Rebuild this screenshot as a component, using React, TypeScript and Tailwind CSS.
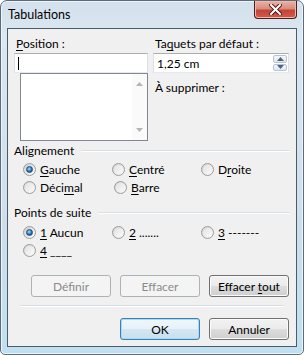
import { ReactNode } from "react";

const Key = ({ children }: { children: ReactNode }) => (
  <span className="underline underline-offset-[2px] decoration-[1px]">{children}</span>
);

const Radio = ({ checked }: { checked?: boolean }) => {
  return (
    <span className="flex h-[13px] w-[13px] shrink-0 items-center justify-center rounded-full border border-[#9c9c9c] bg-linear-to-br from-[#cfcfcf] to-[#ffffff]">
      {checked ? (
        <span className="h-[7px] w-[7px] rounded-full border border-[#1a4a7a] bg-[radial-gradient(circle_at_40%_35%,#a8dcff_0%,#2b78b8_55%,#0f3f70_100%)]" />
      ) : (
        <span className="h-[9px] w-[9px] rounded-full bg-linear-to-br from-[#e2e2e2] to-[#fafafa]" />
      )}
    </span>
  );
};

type OptionProps = {
  checked?: boolean;
  children: ReactNode;
};

const Option = ({ checked, children }: OptionProps) => {
  return (
    <div className="flex h-[18px] w-[91px] items-center gap-[4px]">
      <Radio checked={checked} />
      <span className="whitespace-pre">{children}</span>
    </div>
  );
};

const GroupTitle = ({ children }: { children: ReactNode }) => {
  return (
    <div className="flex h-[15px] items-center gap-[7px]">
      <span>{children}</span>
      <div className="flex-1 border-t border-[#d5dfe5] border-b border-b-white" />
    </div>
  );
};

type ButtonProps = {
  children: ReactNode;
  disabled?: boolean;
  primary?: boolean;
};

const Button = ({ children, disabled, primary }: ButtonProps) => {
  const style = disabled
    ? "border-[#adb2b5] bg-[#f4f4f4] text-[#8b8b8b]"
    : primary
      ? "border-[#3c7fb1] bg-[linear-gradient(#f0f7fc_0%,#e6f1f8_50%,#d5e7f3_50%,#c8dff0_100%)] shadow-[inset_0_0_0_1px_#a5dcf7] text-black"
      : "border-[#707070] bg-[linear-gradient(#f2f2f2_0%,#ebebeb_50%,#dddddd_50%,#cfcfcf_100%)] shadow-[inset_0_0_0_1px_#fbfbfb] text-black";

  return (
    <button
      className={`flex h-[22px] w-[80px] items-center justify-center rounded-[3px] border ${style}`}
    >
      <span className="whitespace-pre">{children}</span>
    </button>
  );
};

const CloseButton = () => {
  return (
    <div className="flex h-[18px] w-[43px] items-center justify-center rounded-b-[4px] border border-t-0 border-[#4d1d1a] bg-[linear-gradient(#eab2a4_0%,#d88c7c_45%,#c2453a_55%,#d5584a_100%)] shadow-[inset_0_0_0_1px_#f0b9ad]">
      <svg width="13" height="11" viewBox="0 0 13 11">
        <path
          d="M2 1 L11 10 M11 1 L2 10"
          stroke="#4a1a16"
          strokeWidth="4"
          strokeLinecap="square"
        />
        <path
          d="M2 1 L11 10 M11 1 L2 10"
          stroke="#ffffff"
          strokeWidth="2"
          strokeLinecap="square"
        />
      </svg>
    </div>
  );
};

export default function App() {
  return (
    <div className="h-[355px] w-[304px] bg-white font-['Lato',sans-serif] text-[12px] leading-[15px] text-black">
      <div className="flex h-full w-full flex-col rounded-t-[7px] rounded-b-[5px] border border-[#5c6b79] bg-[linear-gradient(#d3e1ec_0%,#dbe7f1_10%,#cfdfeb_60%,#bfe0f0_100%)] px-[6px] pb-[7px] shadow-[inset_0_0_0_1px_#eef5fa]">
        <div className="flex h-[27px] items-start justify-between">
          <span className="mt-[6px] pl-[1px] text-[12.5px] text-black">Tabulations</span>
          <CloseButton />
        </div>

        <div className="flex flex-1 flex-col border border-[#4c5b69] bg-[#f0f0f0] px-[6px]">
          <div className="flex pt-[7px]">
            <div className="flex w-[134px] flex-col">
              <span className="mb-[2px] pl-[2px]">
                <Key>P</Key>osition :
              </span>
              <div className="flex h-[20px] items-center border border-[#abadb3] border-b-[#e3e9ef] border-x-[#dbdfe6] bg-white pl-[3px]">
                <span className="h-[13px] w-px bg-black" />
              </div>
              <div className="ml-[6px] flex h-[68px] border border-[#828790] bg-white">
                <div className="flex-1" />
                <div className="flex w-[15px] flex-col items-center justify-between bg-[#fafafa] py-[8px]">
                  <svg width="7" height="4" viewBox="0 0 7 4">
                    <path d="M0 4 L3.5 0 L7 4 Z" fill="#b5b5b5" />
                  </svg>
                  <svg width="7" height="4" viewBox="0 0 7 4">
                    <path d="M0 0 L3.5 4 L7 0 Z" fill="#b5b5b5" />
                  </svg>
                </div>
              </div>
            </div>

            <div className="ml-[5px] flex w-[136px] flex-col">
              <span className="mb-[2px] pl-[2px]">
                Ta<Key>q</Key>uets par défaut :
              </span>
              <div className="flex h-[20px] items-center border border-[#abadb3] border-b-[#e3e9ef] border-x-[#dbdfe6] bg-white pl-[3px]">
                <span className="flex-1">1,25 cm</span>
                <div className="mr-px flex h-[16px] w-[14px] flex-col gap-px">
                  <div className="flex flex-1 items-center justify-center rounded-[2px] border border-[#b8c4cf] bg-linear-to-b from-[#f5f8fa] to-[#dfe6ec]">
                    <svg width="7" height="4" viewBox="0 0 7 4">
                      <path d="M0 4 L3.5 0 L7 4 Z" fill="#4d6185" />
                    </svg>
                  </div>
                  <div className="flex flex-1 items-center justify-center rounded-[2px] border border-[#b8c4cf] bg-linear-to-b from-[#f5f8fa] to-[#dfe6ec]">
                    <svg width="7" height="4" viewBox="0 0 7 4">
                      <path d="M0 0 L3.5 4 L7 0 Z" fill="#4d6185" />
                    </svg>
                  </div>
                </div>
              </div>
              <span className="mt-[7px] pl-[2px]">À supprimer :</span>
            </div>
          </div>

          <div className="mt-[2px]">
            <GroupTitle>Alignement</GroupTitle>
            <div className="mt-[2px] flex flex-col pl-[9px]">
              <div className="flex">
                <Option checked>
                  <Key>G</Key>auche
                </Option>
                <Option>
                  <Key>C</Key>entré
                </Option>
                <Option>
                  D<Key>r</Key>oite
                </Option>
              </div>
              <div className="flex">
                <Option>
                  Déci<Key>m</Key>al
                </Option>
                <Option>
                  <Key>B</Key>arre
                </Option>
              </div>
            </div>
          </div>

          <div className="mt-[9px]">
            <GroupTitle>Points de suite</GroupTitle>
            <div className="mt-[3px] flex flex-col pl-[9px]">
              <div className="flex">
                <Option checked>
                  <Key>1</Key> Aucun
                </Option>
                <Option>
                  <Key>2</Key> .......
                </Option>
                <Option>
                  <Key>3</Key> -------
                </Option>
              </div>
              <div className="flex">
                <Option>
                  <Key>4</Key> ____
                </Option>
              </div>
            </div>
          </div>

          <div className="mt-[16px] flex justify-end gap-[9px] pr-px">
            <Button disabled>Définir</Button>
            <Button disabled>Effacer</Button>
            <Button>
              Effacer <Key>t</Key>out
            </Button>
          </div>

          <div className="mx-[6px] mt-[8px] border-t border-[#d5dfe5] border-b border-b-white" />

          <div className="mt-[11px] flex justify-end gap-[9px] pr-px">
            <Button primary>OK</Button>
            <Button>Annuler</Button>
          </div>
        </div>
      </div>
    </div>
  );
}
